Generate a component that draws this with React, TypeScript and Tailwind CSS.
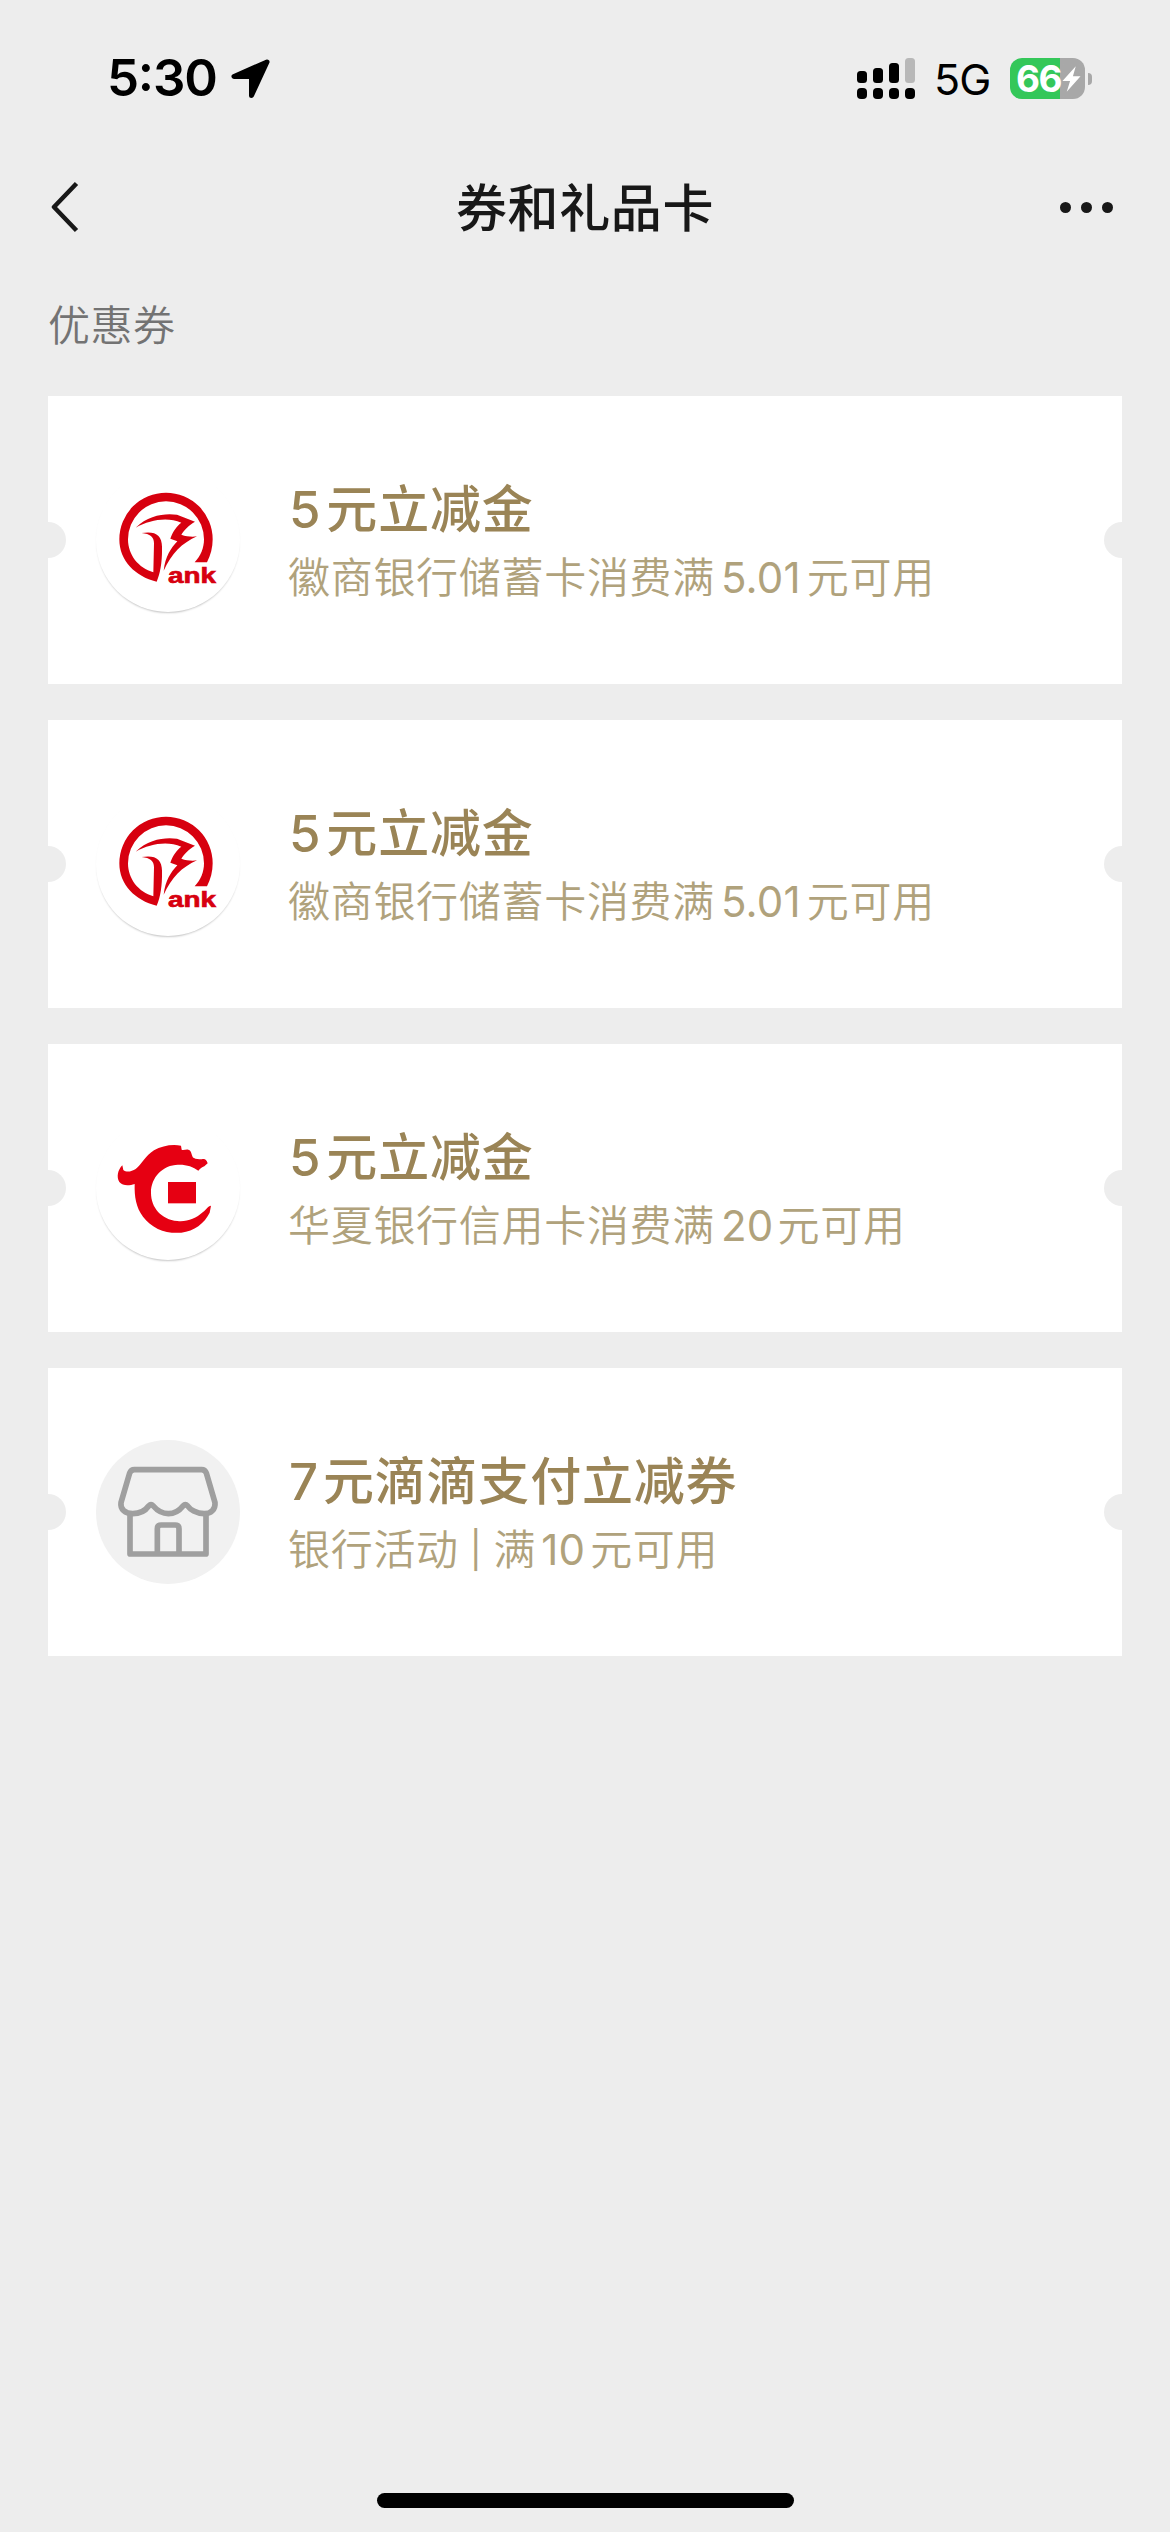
import React from "react";

const HuishangLogo = () => (
  <svg viewBox="168 264 432 432" className="size-full">
    <g fill="#d7000f">
      <path d="M501 547 C512 526 518 502 518 478 A140 140 0 0 0 378 338 A140 140 0 0 0 238 478 C238 542 286 590 350 605 C361 580 367 545 366 500 C366 465 345 452 305 459 C330 462 342 470 342 490 L340 577 C296 564 264 526 264 478 A114 114 0 0 1 378 364 A114 114 0 0 1 492 478 C492 504 482 528 464 547 Z" />
      <path d="M287 443 C325 405 375 399 411 404 L465 425 C448 435 432 450 424 464 C440 470 458 471 471 469 C425 490 395 520 371 572 C376 530 392 505 412 484 L391 476 C398 455 410 438 424 428 C380 410 330 420 287 443 Z" />
      <text x="384" y="608" fontSize="64" fontWeight="700" fontFamily="Liberation Sans, Arial, sans-serif" textLength="144" lengthAdjust="spacingAndGlyphs" stroke="#d7000f" strokeWidth="2">ank</text>
    </g>
  </svg>
);

const HuaxiaLogo = () => (
  <svg viewBox="168 48 432 432" className="size-full" fill="#e60012">
    <path d="M247 196 C233 210 229 232 238 246 C249 259 268 257 284 252 C283 290 288 322 309 350 C336 386 378 402 424 398 C463 393 493 370 509 338 L513 317 C504 318 498 329 489 336 C467 356 441 366 412 363 C364 358 333 323 333 278 C333 231 369 195 414 194 C439 193 459 200 475 212 C480 206 486 201 493 199 L503 190 C500 180 495 174 485 178 C476 178 467 177 462 174 C453 170 457 152 445 149 C438 147 431 152 425 149 L423 137 C395 132 365 138 342 151 C316 167 306 193 287 207 C275 215 259 218 250 210 Z" />
    <rect x="384" y="246" width="84" height="64" />
  </svg>
);

const ShopIcon = () => (
  <svg viewBox="168 240 432 432" className="size-full" fill="none" stroke="#9f9f9f" strokeWidth="17" strokeLinejoin="round">
    <path d="M283 329 H485 Q495 329 499 339 L525 428 C527 448 512 461 493 461 C468 461 450 448 443 438 Q436 431 429 438 C418 452 402 461 385 461 C367 461 352 452 340 438 Q333 431 326 438 C316 452 300 461 278 461 C256 461 240 448 243 428 L269 339 Q273 329 283 329 Z" />
    <path d="M270 461 V582 H498 V461 M352 582 V506 Q352 495 363 495 H406 Q417 495 417 506 V582" />
  </svg>
);

type Part = { t: string; c?: string };
type Coupon = {
  title: Part[];
  desc: Part[];
  logo: React.ReactNode;
  disc: string;
};

const whiteDisc = "bg-white shadow-[0_2px_2px_-1px_rgba(0,0,0,0.22)]";

const huishang: Coupon = {
  title: [{ t: "5", c: "ml-px mr-[5px]" }, { t: "元立减金" }],
  desc: [
    { t: "徽商银行储蓄卡消费满" },
    { t: "5.01", c: "mx-[6px] font-normal tracking-[0.2px]" },
    { t: "元可用" },
  ],
  logo: <HuishangLogo />,
  disc: whiteDisc,
};

const coupons: Coupon[] = [
  huishang,
  huishang,
  {
    title: [{ t: "5", c: "ml-px mr-[5px]" }, { t: "元立减金" }],
    desc: [
      { t: "华夏银行信用卡消费满" },
      { t: "20", c: "mr-[4px] ml-[6px] font-normal tracking-[0.2px]" },
      { t: "元可用" },
    ],
    logo: <HuaxiaLogo />,
    disc: whiteDisc,
  },
  {
    title: [{ t: "7", c: "ml-px mr-[4px]" }, { t: "元滴滴支付立减券" }],
    desc: [
      { t: "银行活动" },
      { t: "|", c: "mx-[11px] text-[36px] font-normal" },
      { t: "满" },
      { t: "10", c: "mx-[5px] font-normal tracking-[0.2px]" },
      { t: "元可用" },
    ],
    logo: <ShopIcon />,
    disc: "bg-[#f1f1f1]",
  },
];

const Parts = ({ parts }: { parts: Part[] }) => (
  <>
    {parts.map((p, i) => (
      <span key={i} className={p.c}>
        {p.t}
      </span>
    ))}
  </>
);

const CouponCard = ({ coupon }: { coupon: Coupon }) => (
  <div className="relative flex h-[288px] items-center overflow-hidden bg-white pl-12">
    <div className={`size-[144px] shrink-0 rounded-full ${coupon.disc}`}>{coupon.logo}</div>
    <div className="ml-12 flex flex-col pt-2 whitespace-nowrap">
      <div className="flex h-[68px] items-center text-[51px] leading-[68px] font-medium tracking-[0.8px] text-[#9a8456]">
        <Parts parts={coupon.title} />
      </div>
      <div className="flex h-[68px] items-center text-[42px] leading-[68px] font-[350] tracking-[0.7px] text-[#b0a27c]">
        <Parts parts={coupon.desc} />
      </div>
    </div>
    <span className="absolute top-[126px] -left-[18px] size-9 rounded-full bg-[#ededed]" />
    <span className="absolute top-[126px] -right-[18px] size-9 rounded-full bg-[#ededed]" />
  </div>
);

const StatusBar = () => (
  <div className="flex h-[156px] items-center pt-px pr-[78px] pl-[107px] text-black">
    <span className="w-[110px] text-[51px] font-semibold tracking-[-1.2px] [font-feature-settings:'case']">5:30</span>
    <svg viewBox="0 0 40 40" className="ml-[14px] size-10">
      <path d="M36 3 L3 17.5 H20.5 V36.5 Z" fill="#000" stroke="#000" strokeWidth="5" strokeLinejoin="round" />
    </svg>
    <svg viewBox="0 0 58 41" className="ml-auto h-[41px] w-[58px]">
      <g fill="#000">
        <rect x="0" y="13" width="10" height="12" rx="3.5" />
        <rect x="16" y="10" width="10" height="15" rx="3.5" />
        <rect x="32" y="5" width="10" height="20" rx="3.5" />
        <rect x="48" y="0" width="10" height="25" rx="3.5" fill="#b8b8b8" />
        <rect x="0" y="30" width="10" height="11" rx="4" />
        <rect x="16" y="30" width="10" height="11" rx="4" />
        <rect x="32" y="30" width="10" height="11" rx="4" />
        <rect x="48" y="30" width="10" height="11" rx="4" />
      </g>
    </svg>
    <span className="ml-[19px] w-[56px] pt-[2px] text-[43px] tracking-[-1px]">5G</span>
    <div className="ml-5 flex h-[41px] w-[75px] items-center rounded-[12px] bg-linear-to-r from-[#34c759] from-[50px] to-[#a8a8a8] to-[50px]">
      <span className="ml-[6px] w-[46px] text-[37px] leading-[41px] font-bold tracking-[-1.5px] text-white">66</span>
      <svg viewBox="0 0 20 28" className="h-7 w-[19px] shrink-0">
        <path d="M14.500 0.500 L0.500 16 H8.500 L5 27.500 L19.500 11 H11.500 Z" fill="#fff" />
      </svg>
    </div>
    <span className="ml-[3px] h-3 w-[4px] rounded-r-full bg-[#a8a8a8]" />
  </div>
);

export default function App() {
  return (
    <div className="flex h-[2532px] w-[1170px] flex-col bg-[#ededed] font-['Inter','Noto_Sans_CJK_SC',sans-serif]">
      <StatusBar />
      <header className="flex h-[102px] items-center justify-between px-[51px] text-[#181818]">
        <svg viewBox="0 0 28 52" className="h-[52px] w-[60px] shrink-0" preserveAspectRatio="xMinYMid" fill="none">
          <path d="M25.500 2.500 L3 26 L25.500 49.500" stroke="#181818" strokeWidth="4.500" strokeLinejoin="round" />
        </svg>
        <h1 className="pt-[3px] text-[51px] leading-none font-medium tracking-[0.6px]">券和礼品卡</h1>
        <div className="flex w-[60px] justify-end gap-[10px] pr-[6px]">
          <span className="size-[11px] shrink-0 rounded-full bg-[#181818]" />
          <span className="size-[11px] shrink-0 rounded-full bg-[#181818]" />
          <span className="size-[11px] shrink-0 rounded-full bg-[#181818]" />
        </div>
      </header>
      <h2 className="flex h-[138px] items-center pb-[4px] pl-12 text-[42px] font-[350] tracking-[0.5px] text-[#737373]">优惠券</h2>
      <main className="flex flex-col gap-9 px-12">
        {coupons.map((c, i) => (
          <CouponCard key={i} coupon={c} />
        ))}
      </main>
      <div className="mx-auto mt-auto mb-6 h-[15px] w-[417px] rounded-full bg-black" />
    </div>
  );
}
